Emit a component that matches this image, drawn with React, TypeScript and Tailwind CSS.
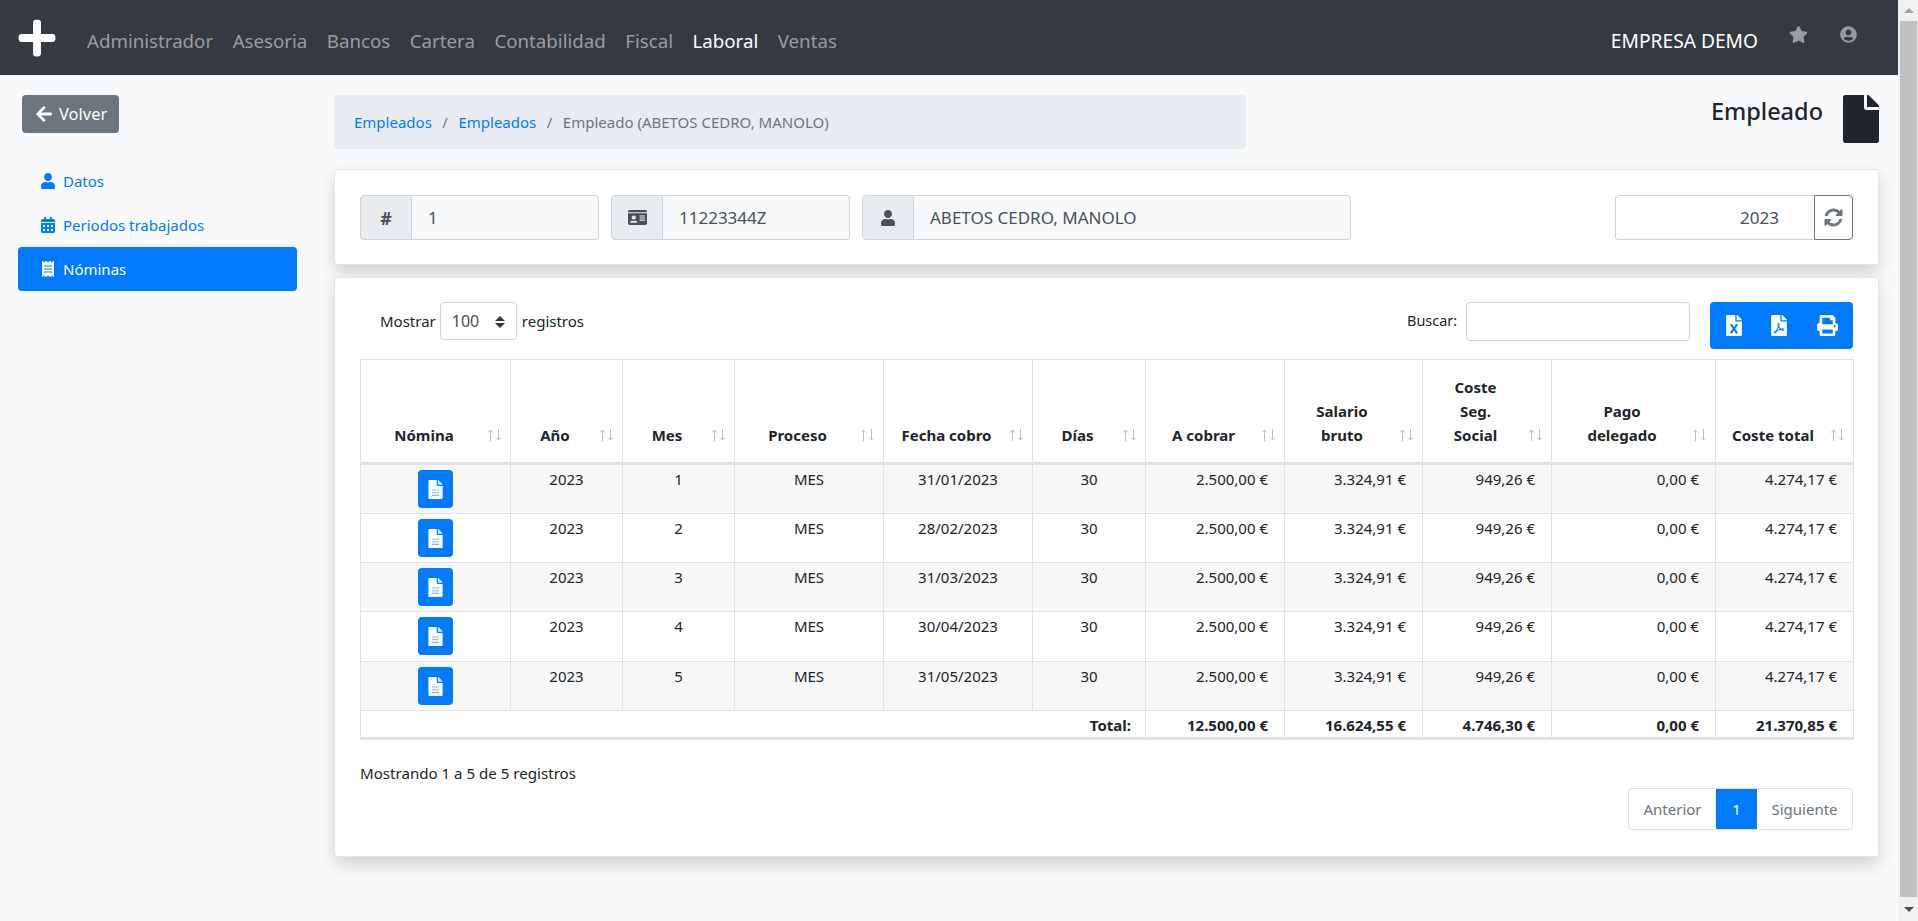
import React from "react";
import {
  FaArrowLeft,
  FaCalendarAlt,
  FaFile,
  FaFileExcel,
  FaFilePdf,
  FaIdCard,
  FaPlus,
  FaPrint,
  FaReceipt,
  FaStar,
  FaUser,
  FaUserCircle,
} from "react-icons/fa";

const menu = ["Administrador", "Asesoria", "Bancos", "Cartera", "Contabilidad", "Fiscal", "Laboral", "Ventas"];

const columns = [
  { label: ["Nómina"], width: "w-[150px]" },
  { label: ["Año"], width: "w-[112px]" },
  { label: ["Mes"], width: "w-[112px]" },
  { label: ["Proceso"], width: "w-[149px]" },
  { label: ["Fecha cobro"], width: "w-[149px]" },
  { label: ["Días"], width: "w-[113px]" },
  { label: ["A cobrar"], width: "w-[139px]" },
  { label: ["Salario", "bruto"], width: "w-[138px]" },
  { label: ["Coste", "Seg.", "Social"], width: "w-[129px]" },
  { label: ["Pago", "delegado"], width: "w-[164px]" },
  { label: ["Coste total"], width: "w-[138px]" },
];

const rows = [
  { mes: 1, fecha: "31/01/2023", rowClass: "h-[49px] bg-[#f7f7f7]" },
  { mes: 2, fecha: "28/02/2023", rowClass: "h-[49px]" },
  { mes: 3, fecha: "31/03/2023", rowClass: "h-[49px] bg-[#f7f7f7]" },
  { mes: 4, fecha: "30/04/2023", rowClass: "h-[50px]" },
  { mes: 5, fecha: "31/05/2023", rowClass: "h-[49px] bg-[#f7f7f7]" },
];

const totals = ["12.500,00 €", "16.624,55 €", "4.746,30 €", "0,00 €", "21.370,85 €"];

function InputGroup({ icon, value, width }: { icon: React.ReactNode; value: string; width: string }) {
  return (
    <div className={`flex h-[45px] ${width}`}>
      <div className="flex w-[52px] shrink-0 items-center justify-center rounded-l border border-[#ced4da] bg-[#e9ecef] text-[#495057]">
        {icon}
      </div>
      <input
        readOnly
        value={value}
        className="min-w-0 flex-1 rounded-r border border-l-0 border-[#ced4da] bg-[#f8f9fa] pl-4 text-[17px] text-[#495057] outline-none"
      />
    </div>
  );
}

function SortArrows() {
  return (
    <span className="absolute right-[8px] bottom-[21px] flex gap-[1px] text-[#212529] opacity-30">
      <svg viewBox="0 0 7 12" className="h-[12px] w-[7px]" fill="none" stroke="currentColor" strokeWidth="1">
        <path d="M3.5 12V1M1 3.5 3.5 1 6 3.5" />
      </svg>
      <svg viewBox="0 0 7 12" className="h-[12px] w-[7px]" fill="none" stroke="currentColor" strokeWidth="1">
        <path d="M3.5 0v11M1 8.5 3.5 11 6 8.5" />
      </svg>
    </span>
  );
}

// file icon with pale lines, the pack's version has the lines cut out
function PayslipIcon() {
  return (
    <svg viewBox="0 0 384 512" className="h-[19px] w-[15px]">
      <path
        fill="#fff"
        d="M224 136V0H24C10.7 0 0 10.7 0 24v464c0 13.3 10.7 24 24 24h336c13.3 0 24-10.7 24-24V160H248c-13.2 0-24-10.8-24-24z"
      />
      <path fill="#cfe4ff" d="M384 121.9v6.1H256V0h6.1c6.4 0 12.5 2.5 17 7l97.9 98c4.5 4.5 7 10.6 7 16.9z" />
      <path fill="#7fbcff" d="M96 256h192v28H96zM96 328h192v28H96zM96 400h192v28H96z" />
    </svg>
  );
}

export default function App() {
  return (
    <div className="flex h-[921px] w-[1918px] overflow-hidden bg-[#f8f9fa] font-['Noto_Sans',sans-serif] text-[15px] leading-6 text-[#212529]">
      <div className="w-[1898px] shrink-0">
        {/* Navbar */}
        <header className="flex h-[75px] items-center bg-[#343a40] pl-[16px] pr-[41px]">
          <FaPlus className="mr-[29px] h-[42px] w-[42px] text-white" />
          <nav className="flex gap-[19.5px] pt-[6px] text-[18.7px]">
            {menu.map((item) => (
              <a key={item} className={item === "Laboral" ? "text-white" : "text-[#9a9da0]"}>
                {item}
              </a>
            ))}
          </nav>
          <span className="ml-auto pt-[6px] text-[19.2px] text-white">EMPRESA DEMO</span>
          <FaStar className="mb-[2px] ml-[31px] h-[19px] w-[19px] -translate-y-[2px] text-[#9a9da0]" />
          <FaUserCircle className="mb-[2px] ml-[32px] h-[17px] w-[17px] -translate-y-[2px] text-[#9a9da0]" />
        </header>

        <div className="flex">
          {/* Sidebar */}
          <aside className="w-[334px] shrink-0 pl-[18px] pt-[20px]">
            <button className="ml-[4px] flex h-[38px] w-[97px] items-center gap-[6px] rounded bg-[#6c757d] pl-[13px] text-[16.5px] text-white">
              <FaArrowLeft className="h-[18px] w-[18px]" />
              Volver
            </button>
            <ul className="mt-[26px] w-[279px] text-[#007bff]">
              <li className="flex h-[44px] items-center pl-[23px]">
                <FaUser className="mr-[8px] h-[16px] w-[14px]" />
                Datos
              </li>
              <li className="flex h-[44px] items-center pl-[23px]">
                <FaCalendarAlt className="mr-[8px] h-[16px] w-[14px]" />
                Periodos trabajados
              </li>
              <li className="flex h-[44px] items-center rounded bg-[#007bff] pl-[23px] text-white">
                <FaReceipt className="mr-[8px] h-[16px] w-[14px]" />
                Nóminas
              </li>
            </ul>
          </aside>

          {/* Content */}
          <main className="w-[1545px] shrink-0 pt-[20px]">
            <div className="mb-[20px] flex h-[54px] items-start justify-between">
              <div className="flex h-[54px] w-[912px] items-center gap-[10.5px] rounded bg-[#e9ecef] pl-[20px] text-[15px] text-[#6c757d]">
                <a className="text-[#007bff]">Empleados</a>
                <span>/</span>
                <a className="text-[#007bff]">Empleados</a>
                <span>/</span>
                <span>Empleado (ABETOS CEDRO, MANOLO)</span>
              </div>
              <div className="flex items-start">
                <h1 className="mr-[20px] text-[23.5px] leading-[32px] font-medium">Empleado</h1>
                <FaFile className="h-[48px] w-[36px]" />
              </div>
            </div>

            <section className="mb-[12px] flex h-[96px] items-start rounded border border-black/10 bg-white pl-[25px] pr-[25px] pt-[25px] shadow-[0_8px_16px_rgba(0,0,0,0.15)]">
              <div className="flex gap-[12px]">
                <InputGroup icon={<span className="text-[18px] font-bold">#</span>} value="1" width="w-[239px]" />
                <InputGroup icon={<FaIdCard className="h-[17px] w-[19px]" />} value="11223344Z" width="w-[239px]" />
                <InputGroup icon={<FaUser className="h-[16px] w-[14px]" />} value="ABETOS CEDRO, MANOLO" width="w-[489px]" />
              </div>
              <div className="ml-auto flex h-[45px] w-[238px]">
                <input
                  readOnly
                  value="2023"
                  className="min-w-0 flex-1 rounded-l border border-r-0 border-[#ced4da] bg-white pr-[35px] text-right text-[17px] text-[#495057] outline-none"
                />
                <button className="flex w-[39px] items-center justify-center rounded-r border border-[#6c757d] text-[#6c757d]">
                  <svg viewBox="0 0 1792 1792" className="h-[21px] w-[21px]" fill="currentColor">
                    <path d="M1639 1056q0 5-1 7-64 268-268 434.5t-478 166.5q-146 0-282.5-55t-243.5-157l-129 129q-19 19-45 19t-45-19-19-45v-448q0-26 19-45t45-19h448q26 0 45 19t19 45-19 45l-137 137q71 66 161 102t187 36q134 0 250-65t186-179q11-17 53-117 8-23 30-23h192q13 0 22.5 9.5t9.5 22.5zm25-800v448q0 26-19 45t-45 19h-448q-26 0-45-19t-19-45 19-45l138-138q-148-137-349-137-134 0-250 65t-186 179q-11 17-53 117-8 23-30 23h-199q-13 0-22.5-9.5t-9.5-22.5v-7q65-268 270-434.5t480-166.5q146 0 284 55.5t245 156.5l130-129q19-19 45-19t45 19 19 45z" />
                  </svg>
                </button>
              </div>
            </section>

            <section className="h-[580px] rounded border border-black/10 bg-white pl-[25px] pr-[25px] pt-[24px] shadow-[0_8px_16px_rgba(0,0,0,0.15)]">
              <div className="mb-[10px] flex h-[47px] items-start">
                <div className="flex h-[38px] items-center pl-[20px]">
                  <span>Mostrar</span>
                  <div className="relative ml-[4px] mr-[5px] flex h-[38px] w-[77px] items-center rounded border border-[#ced4da] pl-[11px] text-[16px] text-[#495057]">
                    100
                    <svg viewBox="0 0 10 12" className="absolute right-[11px] top-[13px] h-[12px] w-[10px]" fill="#343a40">
                      <path d="M5 0 10 5H0zM5 12 0 7h10z" />
                    </svg>
                  </div>
                  <span>registros</span>
                </div>
                <div className="ml-auto flex h-[38px] items-center">
                  <span className="mr-[9px] text-[14.4px]">Buscar:</span>
                  <input className="h-[39px] w-[224px] rounded border border-[#ced4da] outline-none" />
                </div>
                <div className="ml-[20px] flex h-[47px] w-[143px] items-center rounded bg-[#007bff] pl-[16px] text-white">
                  <FaFileExcel className="h-[21px] w-[16px]" />
                  <FaFilePdf className="ml-[29px] h-[21px] w-[16px]" />
                  <FaPrint className="ml-[30px] h-[21px] w-[21px]" />
                </div>
              </div>

              <table className="w-[1493px] table-fixed border-collapse">
                <colgroup>
                  {columns.map((col) => (
                    <col key={col.label.join(" ")} className={col.width} />
                  ))}
                </colgroup>
                <thead>
                  <tr>
                    {columns.map((col) => (
                      <th
                        key={col.label.join(" ")}
                        className="relative border border-b-[3px] border-[#dee2e6] pb-[15px] pl-[10px] pr-[33px] pt-[15px] text-center align-bottom font-bold"
                      >
                        {col.label.map((line) => (
                          <div key={line}>{line}</div>
                        ))}
                        <SortArrows />
                      </th>
                    ))}
                  </tr>
                </thead>
                <tbody>
                  {rows.map((row) => (
                    <tr key={row.mes} className={row.rowClass}>
                      <td className="border border-[#dee2e6] py-[5px] align-top">
                        <div className="mx-auto flex h-[38px] w-[35px] items-center justify-center rounded bg-[#007bff]">
                          <PayslipIcon />
                        </div>
                      </td>
                      <td className="border border-[#dee2e6] pt-[2px] text-center align-top">2023</td>
                      <td className="border border-[#dee2e6] pt-[2px] text-center align-top">{row.mes}</td>
                      <td className="border border-[#dee2e6] pt-[2px] text-center align-top">MES</td>
                      <td className="border border-[#dee2e6] pt-[2px] text-center align-top">{row.fecha}</td>
                      <td className="border border-[#dee2e6] pt-[2px] text-center align-top">30</td>
                      <td className="border border-[#dee2e6] pr-4 pt-[2px] text-right align-top">2.500,00 €</td>
                      <td className="border border-[#dee2e6] pr-4 pt-[2px] text-right align-top">3.324,91 €</td>
                      <td className="border border-[#dee2e6] pr-4 pt-[2px] text-right align-top">949,26 €</td>
                      <td className="border border-[#dee2e6] pr-4 pt-[2px] text-right align-top">0,00 €</td>
                      <td className="border border-[#dee2e6] pr-4 pt-[2px] text-right align-top">4.274,17 €</td>
                    </tr>
                  ))}
                </tbody>
                <tfoot>
                  <tr className="font-bold">
                    <td colSpan={6} className="border border-b-[3px] border-[#dee2e6] pr-[14px] pt-[2px] text-right">
                      Total:
                    </td>
                    {totals.map((total) => (
                      <td key={total} className="border border-b-[3px] border-[#dee2e6] pr-4 pt-[2px] text-right">
                        {total}
                      </td>
                    ))}
                  </tr>
                </tfoot>
              </table>

              <p className="mt-[21px] text-[15.1px]">Mostrando 1 a 5 de 5 registros</p>

              <div className="mt-[3px] flex justify-end">
                <div className="flex h-[42px] overflow-hidden rounded border border-[#dee2e6] text-[#6c757d]">
                  <span className="flex w-[87px] items-center justify-center">Anterior</span>
                  <span className="flex w-[41px] items-center justify-center bg-[#007bff] text-white">1</span>
                  <span className="flex w-[95px] items-center justify-center">Siguiente</span>
                </div>
              </div>
            </section>
          </main>
        </div>
      </div>

      {/* Scrollbar */}
      <div className="flex h-full w-[20px] shrink-0 flex-col bg-[#f1f1f1] pl-[2px] pr-[1px]">
        <div className="flex h-[21px] shrink-0 items-center justify-center">
          <svg viewBox="0 0 10 5" className="h-[5px] w-[10px]" fill="#a3a3a3">
            <path d="M5 0 10 5H0z" />
          </svg>
        </div>
        <div className="flex-1 bg-[#c1c1c1]" />
        <div className="flex h-[24px] shrink-0 items-center justify-center">
          <svg viewBox="0 0 10 5" className="h-[5px] w-[10px]" fill="#505050">
            <path d="M0 0h10L5 5z" />
          </svg>
        </div>
      </div>
    </div>
  );
}
